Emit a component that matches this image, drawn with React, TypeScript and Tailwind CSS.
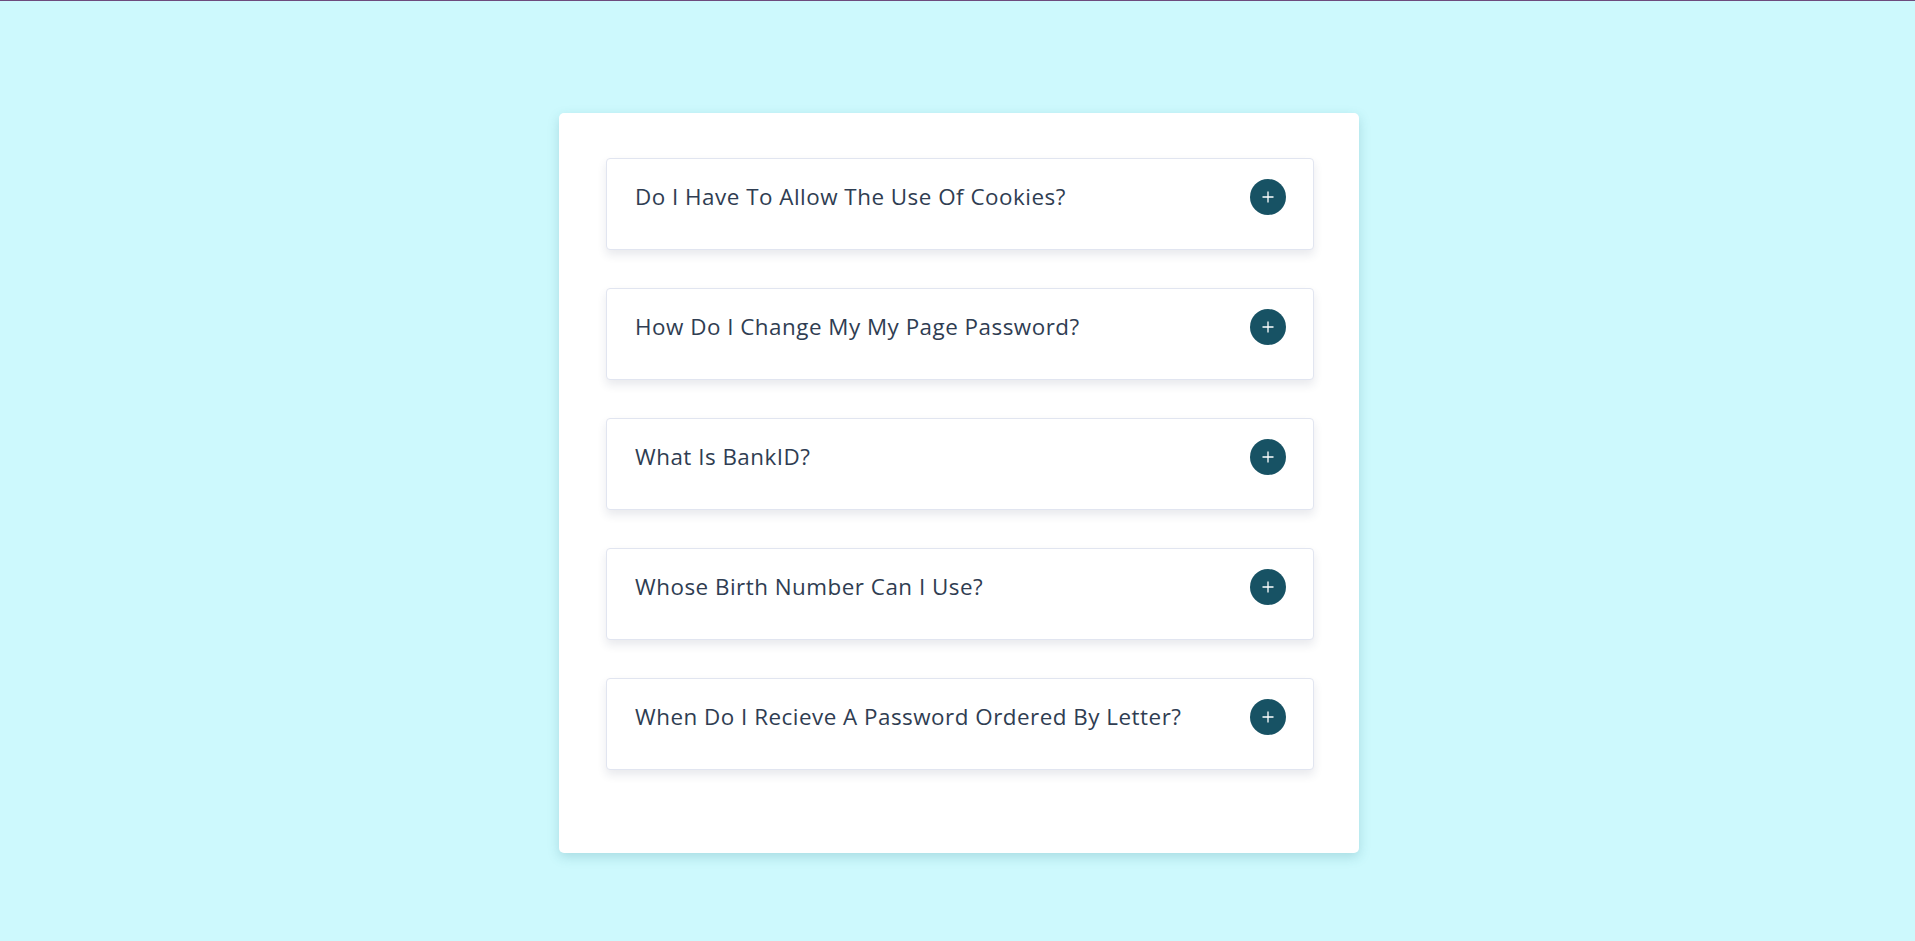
import { useState } from "react";

const faqs = [
  "Do I Have To Allow The Use Of Cookies?",
  "How Do I Change My My Page Password?",
  "What Is BankID?",
  "Whose Birth Number Can I Use?",
  "When Do I Recieve A Password Ordered By Letter?",
];

function FaqItem({ question }: { question: string }) {
  const [open, setOpen] = useState(false);

  return (
    <div className="mb-[38px] rounded-[4px] border border-[#e1e5f0] bg-white shadow-[0_5px_10px_rgba(30,40,80,0.10)]">
      <button
        onClick={() => setOpen(!open)}
        className="flex w-full items-start justify-between pl-[28px] pr-[27px] pt-[20px] pb-[34px] text-left"
      >
        <span className="pt-[3px] text-[22.4px] leading-[30px] tracking-[0.5px] text-[#2f3d52]">
          {question}
        </span>
        <span className="flex h-[36px] w-[36px] shrink-0 items-center justify-center rounded-full bg-[#175264] text-white">
          <svg width="12" height="12" viewBox="0 0 12 12" fill="none">
            <path d="M6 0.5V11.5M0.5 6H11.5" stroke="white" strokeWidth="1.3" />
          </svg>
        </span>
      </button>
    </div>
  );
}

export default function App() {
  return (
    <div
      className="min-h-[941px] w-full border-t border-[#6d4c7d] bg-[#cdf9fd]"
      style={{ fontFamily: '"Open Sans", "Noto Sans", sans-serif' }}
    >
      <div className="flex justify-center pt-[112px] pl-[3px]">
        <div className="w-[800px] rounded-[5px] bg-white pl-[47px] pr-[45px] pt-[45px] pb-[45px] shadow-[0_4px_12px_rgba(40,120,130,0.22)]">
          {faqs.map((q) => (
            <FaqItem key={q} question={q} />
          ))}
        </div>
      </div>
    </div>
  );
}
